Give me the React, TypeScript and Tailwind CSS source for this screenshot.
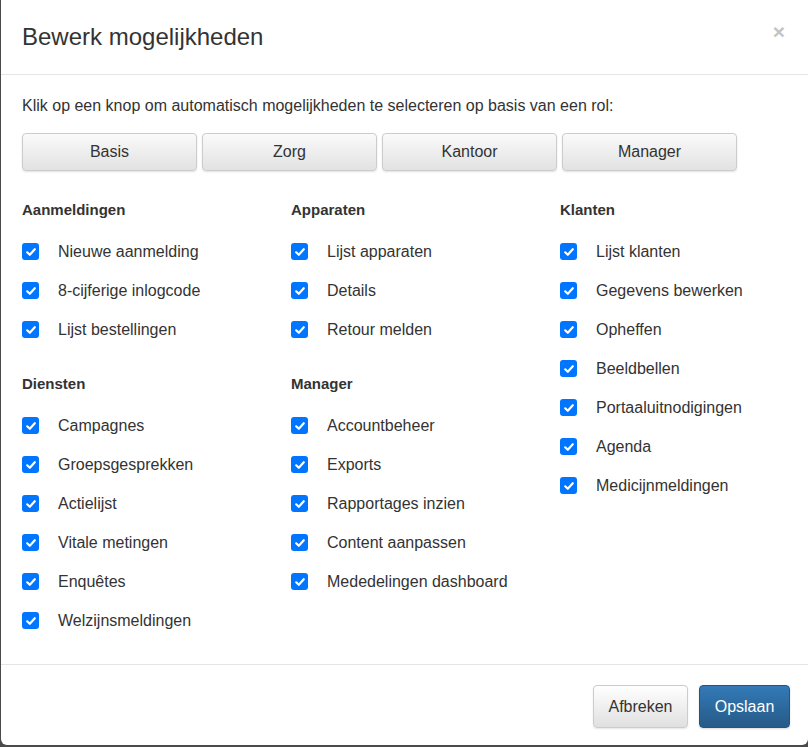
import React from "react";

type Section = { title: string; items: string[] };

const columns: Section[][] = [
  [
    { title: "Aanmeldingen", items: ["Nieuwe aanmelding", "8-cijferige inlogcode", "Lijst bestellingen"] },
    {
      title: "Diensten",
      items: ["Campagnes", "Groepsgesprekken", "Actielijst", "Vitale metingen", "Enquêtes", "Welzijnsmeldingen"],
    },
  ],
  [
    { title: "Apparaten", items: ["Lijst apparaten", "Details", "Retour melden"] },
    {
      title: "Manager",
      items: ["Accountbeheer", "Exports", "Rapportages inzien", "Content aanpassen", "Mededelingen dashboard"],
    },
  ],
  [
    {
      title: "Klanten",
      items: [
        "Lijst klanten",
        "Gegevens bewerken",
        "Opheffen",
        "Beeldbellen",
        "Portaaluitnodigingen",
        "Agenda",
        "Medicijnmeldingen",
      ],
    },
  ],
];

const roles = ["Basis", "Zorg", "Kantoor", "Manager"];

function CheckBox() {
  return (
    <span className="flex h-[17px] w-[17px] shrink-0 items-center justify-center rounded-[3px] bg-[#0075ff]">
      <svg width="12" height="12" viewBox="0 0 12 12" fill="none">
        <path d="M2.2 6.3 4.8 8.8 9.8 3.2" stroke="white" strokeWidth="2.2" strokeLinecap="round" strokeLinejoin="round" />
      </svg>
    </span>
  );
}

function SectionBlock({ section, first }: { section: Section; first: boolean }) {
  return (
    <div className={first ? "" : "mt-[25px]"}>
      <div className="h-[20px] text-[15px] font-bold leading-[20px] text-[#333]">{section.title}</div>
      <div className="mt-[12px] flex flex-col">
        {section.items.map((item) => (
          <label key={item} className="flex h-[39px] items-center">
            <CheckBox />
            <span className="ml-[19px] text-[16px] leading-[20px] text-[#333]">{item}</span>
          </label>
        ))}
      </div>
    </div>
  );
}

export default function App() {
  return (
    <div
      className="h-[747px] w-[808px] overflow-hidden bg-[#4a4a4a] pl-[1px]"
      style={{ fontFamily: '"Liberation Sans", Arial, sans-serif' }}
    >
      <div className="flex h-[745px] w-[807px] flex-col rounded-b-[6px] bg-white">
        {/* header */}
        <div className="flex h-[75px] shrink-0 items-center justify-between border-b border-[#e5e5e5] pl-[21px] pr-[23px]">
          <h4 className="text-[24px] leading-[26px] text-[#333]">Bewerk mogelijkheden</h4>
          <span className="-mt-[12px] text-[21px] font-bold leading-none text-[#c4c4c4]">×</span>
        </div>

        {/* body */}
        <div className="flex-1 px-[21px] pt-[21px]">
          <p className="text-[16px] leading-[20px] text-[#333]">
            Klik op een knop om automatisch mogelijkheden te selecteren op basis van een rol:
          </p>
          <div className="mt-[17px] flex gap-[5px]">
            {roles.map((r) => (
              <button
                key={r}
                className="h-[38px] w-[175px] rounded-[4px] border border-[#ccc] bg-gradient-to-b from-[#fafafa] to-[#e2e2e2] text-[16px] text-[#333] shadow-[0_1px_2px_rgba(0,0,0,0.12)]"
              >
                {r}
              </button>
            ))}
          </div>
          <div className="mt-[29px] grid grid-cols-[269px_269px_1fr]">
            {columns.map((col, ci) => (
              <div key={ci}>
                {col.map((s, si) => (
                  <SectionBlock key={s.title} section={s} first={si === 0} />
                ))}
              </div>
            ))}
          </div>
        </div>

        {/* footer */}
        <div className="flex h-[81px] shrink-0 items-start justify-end gap-[11px] border-t border-[#e5e5e5] pr-[18px] pt-[20px]">
          <button className="h-[43px] w-[95px] rounded-[4px] border border-[#ccc] bg-gradient-to-b from-[#fff] to-[#e0e0e0] text-[16px] text-[#333] shadow-[0_1px_2px_rgba(0,0,0,0.1)]">
            Afbreken
          </button>
          <button className="h-[43px] w-[91px] rounded-[4px] border border-[#245580] bg-gradient-to-b from-[#337ab7] to-[#265a88] text-[16px] text-white shadow-[0_1px_2px_rgba(0,0,0,0.15)]">
            Opslaan
          </button>
        </div>
      </div>
    </div>
  );
}
